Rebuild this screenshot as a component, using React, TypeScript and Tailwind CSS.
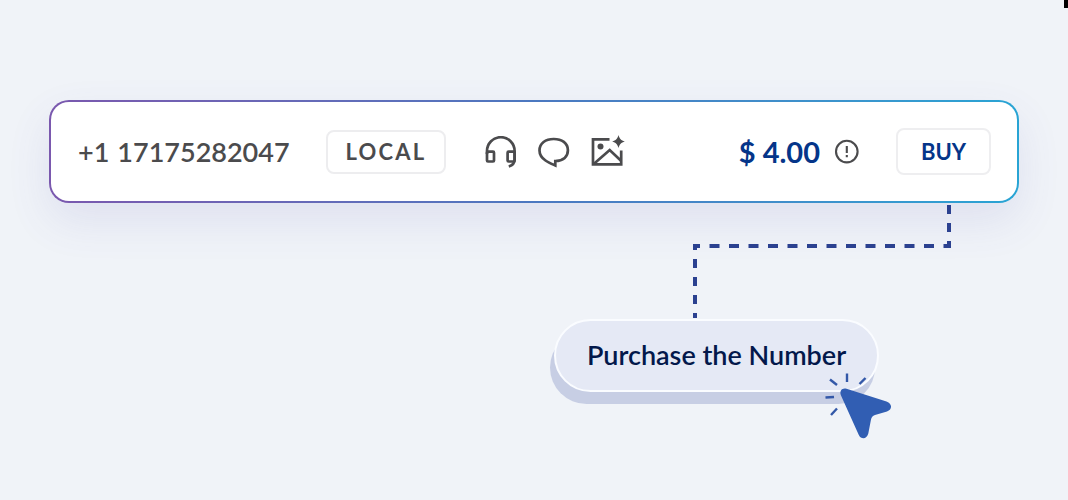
function HeadsetIcon() {
  return (
    <svg width="32" height="32" viewBox="0 0 32 32" fill="none" stroke="currentColor" strokeWidth="2.7" aria-hidden="true">
      <path d="M2 18V15a13.700 13.700 0 0 1 27.600 0v8.500c0 3.500-1.800 5.800-5.800 7" />
      <rect x="2" y="15.700" width="7" height="9.800" rx="1" />
      <rect x="22.600" y="15.700" width="7" height="9.800" rx="1" />
    </svg>
  );
}

function ChatIcon() {
  return (
    <svg width="32" height="32" viewBox="0 0 32 32" fill="none" stroke="currentColor" strokeWidth="2.7" aria-hidden="true">
      <path d="M17.300 29.400V25C25 24.800 29.900 21 29.900 14.300C29.900 7 23.800 3 15.700 3S1.500 7.300 1.500 14.400C1.500 19 4 22 7.500 24.500C10.500 26.600 14 28 17.300 29.400Z" />
    </svg>
  );
}

function ImageSparkIcon() {
  return (
    <svg width="34" height="34" viewBox="0 0 34 34" fill="none" stroke="currentColor" strokeWidth="2.7" aria-hidden="true">
      <path d="M18.500 4.300H2V29.300H30.200V15.500" />
      <path d="M3 28.700 18.700 15 30 25.800" />
      <circle cx="9.500" cy="11.500" r="3" fill="currentColor" stroke="none" />
      <path d="M27.500 0c1.200 4 2.500 5.300 6.300 6.500-3.800 1.200-5.100 2.500-6.300 6.500-1.200-4-2.500-5.300-6.300-6.500 3.800-1.200 5.100-2.500 6.300-6.500Z" fill="currentColor" stroke="none" />
    </svg>
  );
}

function InfoIcon() {
  return (
    <svg width="26" height="26" viewBox="0 0 26 26" fill="none" stroke="currentColor" strokeWidth="2.1" aria-hidden="true">
      <circle cx="12.800" cy="12.600" r="10.800" />
      <path d="M12.800 7v7M12.800 16v2.300" />
    </svg>
  );
}

function Connector() {
  return (
    <svg width="258" height="116" viewBox="0 0 258 116" fill="none" stroke="#2b4190" strokeWidth="4" aria-hidden="true">
      <path d="M256 2v43" strokeDasharray="9 9" />
      <path d="M0 43h258" strokeDasharray="10 9.5" strokeDashoffset="3" />
      <path d="M2 41v74" strokeDasharray="9 9" strokeDashoffset="3" />
    </svg>
  );
}

function ClickCursor() {
  return (
    <svg width="68" height="68" viewBox="0 0 68 68" fill="none" aria-hidden="true">
      <g stroke="#3358a8" strokeWidth="2.4">
        <path d="M5 7.500 12 13" />
        <path d="M22 1.500V10" />
        <path d="M40.500 6 34.500 12" />
        <path d="M.500 25.500 9 25" />
        <path d="M12 36.500 6 43" />
      </g>
      <path
        d="M21.500 16.800 61.500 29.500C67.500 31.800 67.500 37.500 62 39.500L50 43C47.500 44 46.500 45.300 46 47.500L43.300 61.500C41.800 67.500 36 67.500 33.800 63L16 23.500C14 18.500 17.500 15.500 21.500 16.800Z"
        fill="#315eb3"
      />
    </svg>
  );
}

export default function App() {
  return (
    <main className="relative min-h-screen bg-[#f0f3f8] px-[49px] pt-[100px] pb-24 font-['Lato','Open_Sans',sans-serif]">
      <div className="absolute top-0 right-0 h-2 w-1 bg-black" />

      <section className="rounded-[20px] bg-linear-to-r from-[#7a58ae] via-[#4b78c0] to-[#28a4d4] p-[2px] shadow-[0_18px_44px_rgba(80,80,170,0.11)]">
        <div className="flex items-center justify-between rounded-[18px] bg-white py-[26px] pr-[26px] pl-[27px] text-[#4b4b4d]">
          <div className="flex items-center gap-[39px]">
            <div className="flex w-[209px] gap-2 text-[27px] leading-[47px] font-semibold whitespace-nowrap">
              <span>+1</span>
              <span>17175282047</span>
            </div>
            <span className="flex h-11 w-[120px] items-center justify-center rounded-lg border-2 border-[#ededef] text-[22px] font-bold tracking-widest">
              LOCAL
            </span>
            <div className="flex items-center gap-[21px]">
              <HeadsetIcon />
              <ChatIcon />
              <ImageSparkIcon />
            </div>
          </div>

          <div className="flex items-center">
            <span className="text-[29px] leading-[47px] font-bold text-[#053589]">$ 4.00</span>
            <button type="button" aria-label="Price details" className="ml-3.5">
              <InfoIcon />
            </button>
            <button
              type="button"
              className="ml-9 h-[47px] w-[95px] rounded-lg border-2 border-[#eeeef0] text-[22px] font-bold text-[#053589]"
            >
              BUY
            </button>
          </div>
        </div>
      </section>

      <div className="flex justify-end pr-[68px]">
        <Connector />
      </div>

      <div className="flex justify-end pr-[140px]">
        <div className="relative">
          <button
            type="button"
            className="h-[73px] w-[325px] rounded-full border-2 border-[#fafcff] bg-[#e5e9f5] text-[27px] font-semibold whitespace-nowrap text-[#03184b] shadow-[-4px_12px_0_#c7cee4]"
          >
            Purchase the Number
          </button>
          <div className="pointer-events-none absolute -right-3.5 -bottom-12">
            <ClickCursor />
          </div>
        </div>
      </div>
    </main>
  );
}
